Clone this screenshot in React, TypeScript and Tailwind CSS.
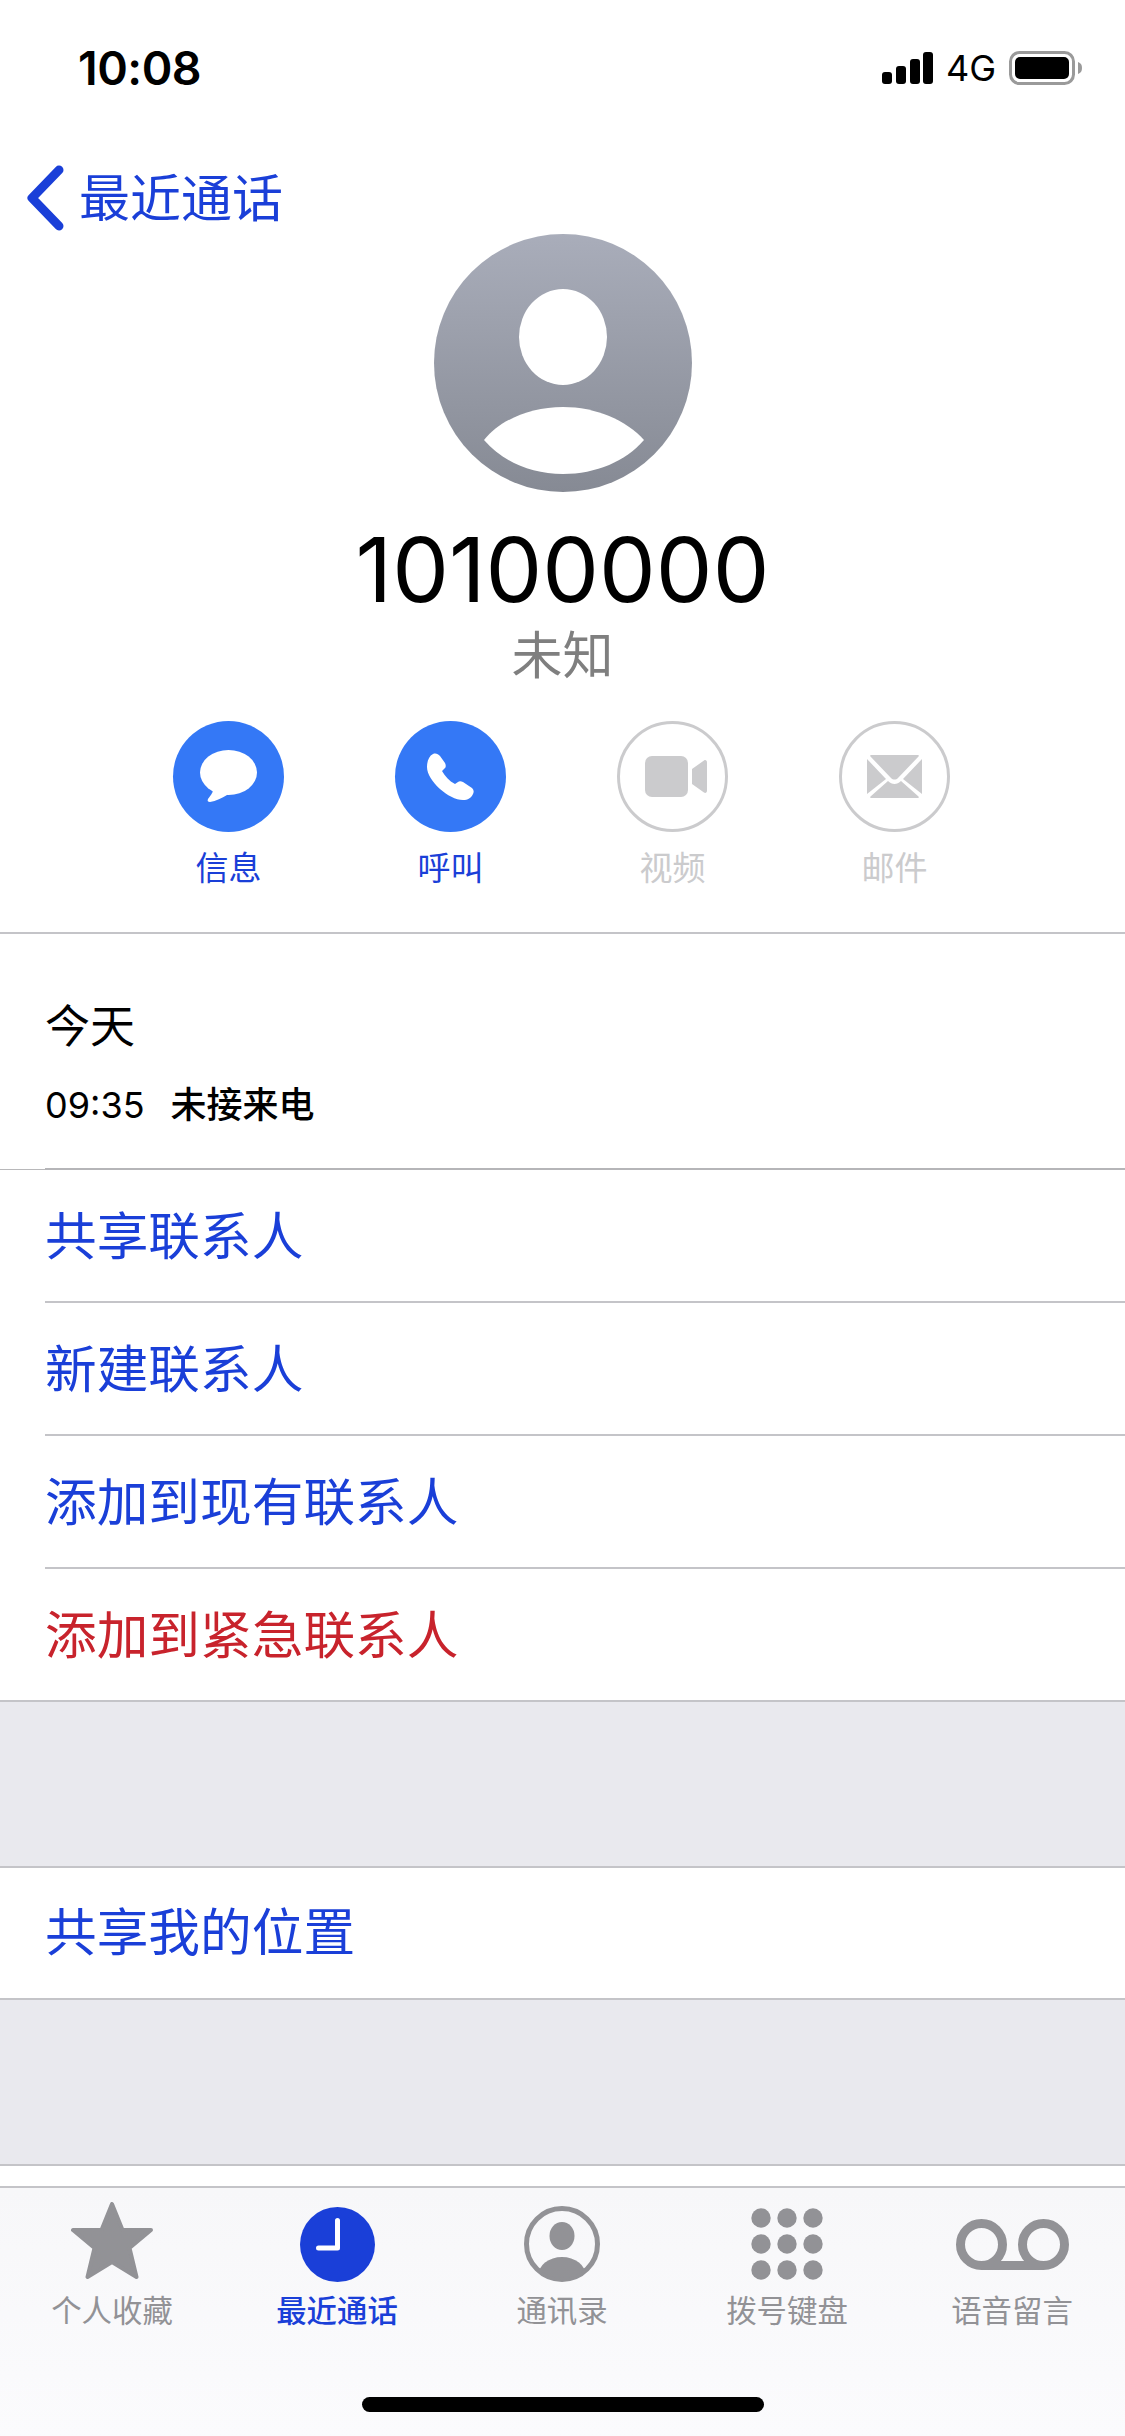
const cjk = "font-['Inter','Noto_Sans_CJK_SC',sans-serif]";

const blue = "text-[#1a3fd8]";

function StatusBar() {
  return (
    <div className="flex h-[136px] items-center justify-between pl-[78px] pr-[43px]">
      <span className="text-[46.500px] font-semibold leading-none tracking-[-0.5px] text-black">10:08</span>
      <div className="flex items-center">
        <svg width="51" height="32" viewBox="0 0 51 32" fill="#000">
          <rect x="0" y="20" width="10" height="12" rx="3" />
          <rect x="14" y="14" width="10" height="18" rx="3" />
          <rect x="28" y="7" width="10" height="25" rx="3" />
          <rect x="41" y="0" width="10" height="32" rx="3" />
        </svg>
        <span className="ml-[13px] text-[36px] font-normal leading-none text-black">4G</span>
        <svg className="ml-[13px]" width="73" height="34" viewBox="0 0 73 34">
          <rect x="1.500" y="1.500" width="63" height="31" rx="9" fill="none" stroke="#9a9a9a" strokeWidth="3" />
          <rect x="6" y="6" width="54" height="22" rx="5" fill="#000" />
          <path d="M69 11c3 1 4 3 4 6s-1 5-4 6z" fill="#9a9a9a" />
        </svg>
      </div>
    </div>
  );
}

function Avatar() {
  return (
    <svg width="258" height="258" viewBox="0 0 258 258">
      <defs>
        <linearGradient id="avatarBg" x1="0" y1="0" x2="0" y2="1">
          <stop offset="0" stopColor="#a9adba" />
          <stop offset="1" stopColor="#868a94" />
        </linearGradient>
      </defs>
      <circle cx="129" cy="129" r="129" fill="url(#avatarBg)" />
      <ellipse cx="129" cy="103" rx="44" ry="48" fill="#fff" />
      <path d="M50 206C66 186 96 173 129 173s63 13 81 33c-18 21-48 34-81 34s-61-13-79-34z" fill="#fff" />
    </svg>
  );
}

function MessageIcon() {
  return (
    <svg className="-mt-[1px]" width="57" height="52" viewBox="0 0 57 52" fill="#fff">
      <ellipse cx="28.500" cy="22.500" rx="28.500" ry="22.500" />
      <path d="M13 39l0 1c0 3-3 6-5 9-1 2 0 3 2 3 6-1 12-4 17-7l4-3z" />
    </svg>
  );
}

function PhoneIcon() {
  return (
    <svg width="47" height="47" viewBox="0 0 47 47" fill="#fff">
      <path d="M0 14C0 8 2 3 6 1c3-1 5 0 7 2l5 7c1 2 1 4 0 5l-3 3c3 5 7 10 13 13l3-2c1-1 3-1 5 0l9 6c2 2 2 4 1 6-2 4-5 6-10 6C22 47 0 28 0 14z" />
    </svg>
  );
}

function VideoIcon() {
  return (
    <svg className="ml-[6px]" width="62" height="41" viewBox="0 0 62 41" fill="#cbcbcd">
      <rect x="0" y="0" width="43" height="41" rx="7" />
      <path d="M47 13L59 4.500c1.500-1 3 0 3 2v28c0 2-1.500 3-3 2L47 28z" />
    </svg>
  );
}

function MailIcon() {
  return (
    <svg width="55" height="43" viewBox="0 0 55 43" fill="#cbcbcd">
      <path d="M4 0h47c1 0 1 1 .5 1.500L31 23c-2 2-5 2-7 0L3.500 1.500C3 1 3 0 4 0z" />
      <path d="M0 4l19 20L0 39z" />
      <path d="M55 4L36 24l19 15z" />
      <path d="M4 43c-1 0-1-1-.5-1.500L21 26c4 4 9 4 13 0l17.500 15.500c.5.500.5 1.500-.5 1.500z" />
    </svg>
  );
}

const actions = [
  { label: "信息", icon: <MessageIcon />, on: true },
  { label: "呼叫", icon: <PhoneIcon />, on: true },
  { label: "视频", icon: <VideoIcon />, on: false },
  { label: "邮件", icon: <MailIcon />, on: false },
];

function ActionRow() {
  return (
    <div className="mt-[35px] flex justify-center pr-[2px]">
      {actions.map((a) => (
        <div key={a.label} className="flex w-[222px] flex-col items-center">
          {a.on ? (
            <div className="flex size-[111px] items-center justify-center rounded-full bg-[#3478f6]">{a.icon}</div>
          ) : (
            <div className="flex size-[111px] items-center justify-center rounded-full border-[3px] border-[#cbcbcd]">{a.icon}</div>
          )}
          <span className={a.on ? "mt-[14px] text-[33px] leading-[44px] text-[#1a3fd8]" : "mt-[14px] text-[33px] leading-[44px] text-[#cbcbcd]"}>
            {a.label}
          </span>
        </div>
      ))}
    </div>
  );
}

function ListRow({ text, red, first }: { text: string; red?: boolean; first?: boolean }) {
  return (
    <div className="flex">
      <div className="w-[45px]">{first && <div className="mt-[1px] h-[1px] bg-[#b8b8ba]" />}</div>
      <div
        className={
          (first ? "border-[#b5b5b8] " : "border-[#c4c4c8] ") +
          "flex h-[133px] flex-1 items-center border-t-[2px] pt-[2px] text-[51.700px] " +
          (red ? "text-[#c8232c]" : blue)
        }
      >
        {text}
      </div>
    </div>
  );
}

function Gap() {
  return <div className="h-[168px] border-y-[2px] border-[#c4c4c8] bg-[#e9e9ee]" />;
}

function StarIcon() {
  return (
    <svg className="mr-[2px]" width="82" height="85" viewBox="0 0 82 85" fill="#929296" stroke="#929296" strokeWidth="4" strokeLinejoin="round">
      <path d="M41 2l10.500 26H80L58.500 46l7 29L41 60 16.500 75l7-29L2 28h28.500z" />
    </svg>
  );
}

function ClockIcon() {
  return (
    <svg width="75" height="75" viewBox="0 0 75 75">
      <circle cx="37.500" cy="37.500" r="37.500" fill="#1a3fd8" />
      <path d="M37.500 13.500v27.500H18.500" fill="none" stroke="#fff" strokeWidth="5" strokeLinecap="round" strokeLinejoin="round" />
    </svg>
  );
}

function ContactIcon() {
  return (
    <svg className="mr-[1px]" width="76" height="76" viewBox="0 0 76 76">
      <defs>
        <clipPath id="contactClip">
          <circle cx="38" cy="38" r="34" />
        </clipPath>
      </defs>
      <circle cx="38" cy="38" r="35.500" fill="none" stroke="#929296" strokeWidth="5" />
      <ellipse cx="38" cy="30" rx="12.500" ry="14" fill="#929296" />
      <ellipse cx="38" cy="70" rx="24" ry="19" fill="#929296" clipPath="url(#contactClip)" />
    </svg>
  );
}

function KeypadIcon() {
  const xs = [10, 36, 62];
  const ys = [10, 36, 62];
  return (
    <svg className="mr-[1px]" width="72" height="72" viewBox="0 0 72 72" fill="#929296">
      {ys.map((y) => xs.map((x) => <circle key={x + "-" + y} cx={x} cy={y} r="9.700" />))}
    </svg>
  );
}

function VoicemailIcon() {
  return (
    <svg width="113" height="51" viewBox="0 0 113 51" fill="none" stroke="#929296" strokeWidth="9">
      <circle cx="25.500" cy="25.500" r="21" />
      <circle cx="87.500" cy="25.500" r="21" />
      <path d="M25.500 46.500h62" />
    </svg>
  );
}

const tabs = [
  { label: "个人收藏", icon: <StarIcon /> },
  { label: "最近通话", icon: <ClockIcon />, active: true },
  { label: "通讯录", icon: <ContactIcon /> },
  { label: "拨号键盘", icon: <KeypadIcon /> },
  { label: "语音留言", icon: <VoicemailIcon /> },
];

function TabBar() {
  return (
    <div className="flex flex-1 flex-col bg-linear-to-b from-[#f7f7f9] to-[#fbfbfd]">
      <div className="flex">
        {tabs.map((t) => (
          <div key={t.label} className="flex w-[225px] flex-col items-center">
            <div className="flex h-[98px] items-center pt-[14px]">{t.icon}</div>
            <span className={t.active ? "mt-[5px] mr-[1px] text-[30.400px] font-medium leading-[40px] text-[#1a3fd8]" : "mt-[5px] mr-[1px] text-[30.400px] leading-[40px] text-[#929296]"}>
              {t.label}
            </span>
          </div>
        ))}
      </div>
      <div className="mx-auto mt-[66px] h-[15px] w-[402px] rounded-full bg-black" />
    </div>
  );
}

export default function App() {
  return (
    <div className={"flex h-[2436px] w-[1125px] flex-col overflow-hidden bg-white " + cjk}>
      <StatusBar />
      <div className={"flex h-[98px] items-center pt-[26px] pl-[24px] " + blue}>
        <svg width="42" height="66" viewBox="0 0 42 66" fill="none" stroke="#1a3fd8" strokeWidth="9" strokeLinecap="round" strokeLinejoin="round">
          <path d="M35 5L8 33l27 28" />
        </svg>
        <span className="ml-[13px] text-[51px] leading-none">最近通话</span>
      </div>
      <div className="flex flex-col items-center">
        <Avatar />
        <div className="mt-[28px] text-[90px] font-normal leading-[100px] text-black">10100000</div>
        <div className="mt-[6px] text-[51px] leading-[60px] text-[#7f7f7f]">未知</div>
      </div>
      <ActionRow />
      <div className="mt-[42px] border-t-[2px] border-[#c4c4c8] pl-[45px]">
        <div className="pt-[65px] text-[45px] leading-[56px] text-black">今天</div>
        <div className="mt-[24px] flex h-[52px] items-center text-black">
          <span className="text-[36px]">09:35</span>
          <span className="ml-[26px] text-[36px] font-medium">未接来电</span>
        </div>
        <div className="h-[37px]" />
      </div>
      <ListRow text="共享联系人" first />
      <ListRow text="新建联系人" />
      <ListRow text="添加到现有联系人" />
      <ListRow text="添加到紧急联系人" red />
      <Gap />
      <div className="flex h-[130px] items-center pl-[45px] text-[51.700px] text-[#1a3fd8]">共享我的位置</div>
      <Gap />
      <div className="h-[22px] border-b-[2px] border-[#c4c4c8]" />
      <TabBar />
    </div>
  );
}
